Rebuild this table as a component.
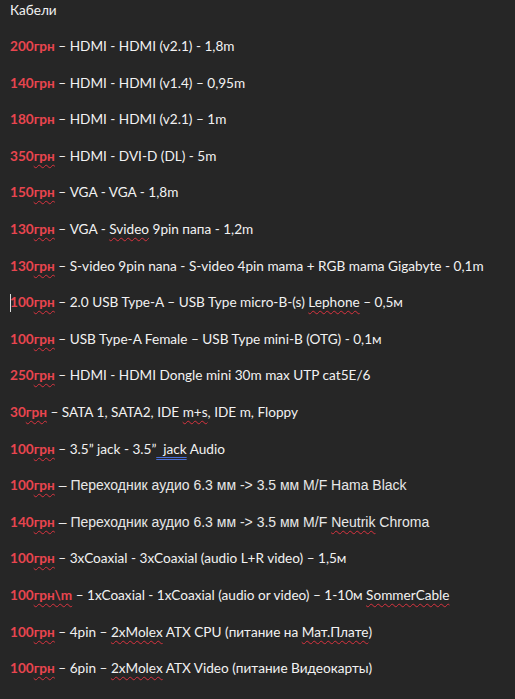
import React from 'react';

const red = 'text-[#e8454f] font-bold';
const wavy = 'underline decoration-wavy decoration-[#d8333f] decoration-1 underline-offset-[3px]';

const Price = ({ value, suffix = 'грн', spell = true }) => (
  <span className={red}>
    {value}
    <span className={spell ? wavy : ''}>{suffix}</span>
  </span>
);

const Sp = ({ children }) => <span className={wavy}>{children}</span>;

const rows = [
  { p: '200', spell: false, body: <> – HDMI - HDMI (v2.1) - 1,8m</> },
  { p: '140', spell: false, body: <> – HDMI - HDMI (v1.4) – 0,95m</> },
  { p: '180', spell: false, body: <> – HDMI - HDMI (v2.1) – 1m</> },
  { p: '350', body: <> – HDMI - DVI-D (DL) - 5m</> },
  { p: '150', body: <> – VGA - VGA - 1,8m</> },
  { p: '130', body: <> – VGA - <Sp>Svideo</Sp> 9pin папа - 1,2m</> },
  { p: '130', body: <> – S-video 9pin nana - S-video 4pin mama + RGB mama Gigabyte - 0,1m</> },
  { p: '100', cursor: true, body: <> – 2.0 USB Type-A – USB Type micro-B-(s) <Sp>Lephone</Sp> – 0,5м</> },
  { p: '100', body: <> – USB Type-A Female – USB Type mini-B (OTG) - 0,1м</> },
  { p: '250', body: <> – HDMI - HDMI Dongle mini 30m max UTP cat5E/6</> },
  { p: '30', body: <> – SATA 1, SATA2, IDE <Sp>m+s</Sp>, IDE m, Floppy</> },
  {
    p: '100',
    body: (
      <>
        {' – 3.5” jack - 3.5”'}
        <span className="underline decoration-double decoration-[#4a6fd8] underline-offset-[3px]">{'  jack'}</span>
        {' Audio'}
      </>
    ),
  },
  { p: '100', arial: true, body: <> – Переходник аудио 6.3 мм -&gt; 3.5 мм M/F Hama Black</> },
  { p: '140', arial: true, body: <> – Переходник аудио 6.3 мм -&gt; 3.5 мм M/F <Sp>Neutrik</Sp> Chroma</> },
  { p: '100', body: <> – 3xCoaxial - 3xCoaxial (audio L+R video) – 1,5м</> },
  { p: '100', suffix: 'грн\\m', body: <> – 1xCoaxial - 1xCoaxial (audio or video) – 1-10м <Sp>SommerCable</Sp></> },
  { p: '100', body: <> – 4pin – <Sp>2xMolex</Sp> ATX CPU (питание на <Sp>Мат.Плате</Sp>)</> },
  { p: '100', body: <> – 6pin – <Sp>2xMolex</Sp> ATX Video (питание Видеокарты)</> },
];

export default function App() {
  return (
    <div className="w-[515px] h-[699px] bg-[#262626] overflow-hidden text-[#f2f2f2] font-['Lato',sans-serif] text-[13.6px] pl-[10px]">
      <div className="h-[28px] leading-[20px]">Кабели</div>
      {rows.map((r, i) => (
        <div key={i} className="relative h-[36.6px] leading-[36.6px] whitespace-pre">
          {r.cursor && <span className="absolute left-[0px] top-[10px] h-[18px] w-px bg-[#dddddd]" />}
          <Price value={r.p} suffix={r.suffix} spell={r.spell !== false} />
          <span className={r.arial ? "font-['Liberation_Sans',sans-serif] text-[14px] text-[#e8e8e8]" : ''}>{r.body}</span>
        </div>
      ))}
    </div>
  );
}
